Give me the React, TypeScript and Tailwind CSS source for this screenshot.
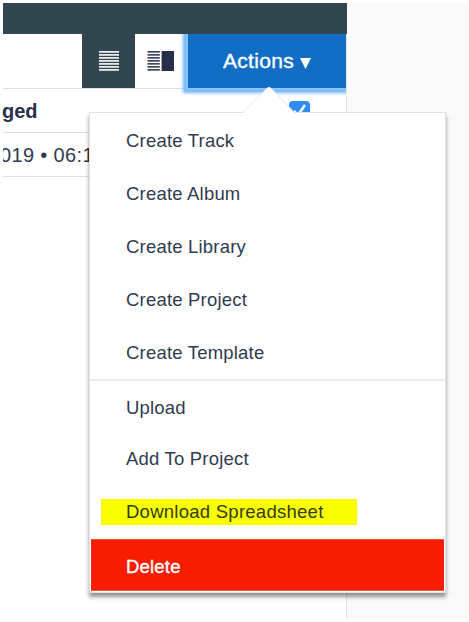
const createItems = ['Create Track', 'Create Album', 'Create Library', 'Create Project', 'Create Template'];

function ListIcon() {
  return (
    <svg width="20" height="20" viewBox="0 0 20 20" fill="#e6eaeb">
      {[0, 3, 6, 9, 12, 15, 18].map((y) => (
        <rect key={y} x="0" y={y} width="20" height="1.8" />
      ))}
    </svg>
  );
}

function SplitIcon() {
  return (
    <svg width="27" height="20" viewBox="0 0 27 20" fill="#252f4a">
      {[0, 3, 6, 9, 12, 15, 18].map((y) => (
        <rect key={y} x="0.5" y={y} width="12.3" height="1.7" fill="#3f4861" />
      ))}
      <rect x="14.6" y="0" width="12.4" height="20" />
    </svg>
  );
}

function Menu() {
  return (
    <div className="absolute left-[86px] top-[109px] h-[481px] w-[357px] border border-[#e2e2e2] bg-white pt-px text-[18.5px] tracking-[0.2px] text-[#303b50] shadow-[0_4px_4px_rgba(0,0,0,0.42)]">
      <svg className="absolute left-[153px] top-[-27px]" width="52" height="29" viewBox="0 0 52 29">
        <path d="M0 27.5 L24 2.2 Q26 0.5 28 2.2 L52 27.5 V29 H0 Z" fill="#fff" />
        <path d="M0 26.7 L24 2.2 Q26 0.5 28 2.2 L52 26.7" fill="none" stroke="#e2e5e8" />
      </svg>
      <ul className="h-[267px] border-b-2 border-[#ececec]">
        {createItems.map((item) => (
          <li key={item} className="flex h-[53px] items-center pl-9">{item}</li>
        ))}
      </ul>
      <ul>
        <li className="flex h-[52px] items-center pl-9 pt-[2px]">Upload</li>
        <li className="flex h-[52px] items-center pl-9">Add To Project</li>
        <li className="flex h-[54px] items-center pl-[11px]">
          <span className="flex h-[26px] w-[256px] items-center bg-[#faff00] pl-[25px] tracking-[0.26px] text-[#353c16]">Download Spreadsheet</span>
        </li>
      </ul>
      <div className="mx-px flex h-[52px] items-center border-y border-[#e95b20] bg-[#f81c00] pl-[35px] pt-[3px] text-white [-webkit-text-stroke:0.35px_white]">
        Delete
      </div>
    </div>
  );
}

export default function App() {
  return (
    <div className="h-[622px] w-[469px] overflow-hidden bg-white pl-[3px] pt-[3px] font-['Liberation_Sans',Arial,sans-serif]">
      <main className="relative flex h-[616px] w-[466px] bg-[#fafafa]">
        <section className="h-full w-[344px] border-r border-[#e4e4e4] bg-white">
          <header className="h-[31px] w-[344px] bg-[#32464f]" />
          <div className="flex h-[55px] border-b border-[#dcdfe2]">
            <div className="w-[79px]" />
            <button className="flex h-[54px] w-[53px] items-center justify-center bg-[#32464f]"><ListIcon /></button>
            <button className="flex h-[54px] w-[50px] items-center pl-[12px]"><SplitIcon /></button>
            <div className="h-[63px] w-[161px] shrink-0 pl-[3px] [clip-path:inset(0_0_0_-6px)]">
              <button className="flex h-[54px] w-[158px] items-center bg-[#126dc5] pl-[35px] text-[21px] tracking-[0.3px] text-white shadow-[0_0_0_2px_#8bc5fc,0_0_3px_5px_#6eb6fb] [-webkit-text-stroke:0.35px_white]">
                Actions
                <svg className="ml-[6px] mt-[4px]" width="11" height="11" viewBox="0 0 11 11"><path d="M0 0H11L5.5 11Z" fill="white" /></svg>
              </button>
            </div>
          </div>
          <div className="flex h-[44px] items-center justify-between border-b border-[#e0e0e0] pr-[36px] text-[20px] font-bold text-[#27314b]">
            <span className="-ml-px pt-px">ged</span>
            <span className="flex h-[20px] w-[21px] items-center justify-center rounded-[4px] bg-[#2f8cf5]">
              <svg width="17" height="17" viewBox="0 0 17 17"><path d="M3 9L7 13L14 3" fill="none" stroke="white" strokeWidth="2.5" /></svg>
            </span>
          </div>
          <div className="flex h-[44px] items-center whitespace-nowrap border-b border-[#e0e0e0] text-[20px] tracking-[0.35px] text-[#303b50] [clip-path:inset(0)]">
            <span className="-ml-[3px]">019 • 06:1</span>
          </div>
        </section>
        <Menu />
      </main>
    </div>
  );
}
